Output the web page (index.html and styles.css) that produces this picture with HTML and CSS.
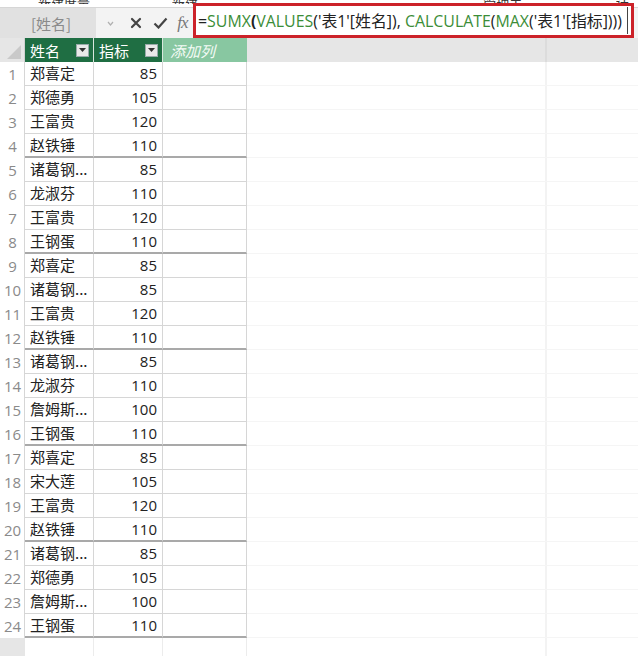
FILE: index.html
```html
<!DOCTYPE html>
<html lang="zh">
<head>
<meta charset="utf-8">
<title>Data view</title>
<link rel="stylesheet" href="styles.css">
</head>
<body>
<div class="topstrip">
  <span class="frag f1">新建度量值</span>
  <span class="frag f2">新建列</span>
  <span class="frag f3">管理关系</span>
  <span class="frag f4">计算</span>
</div>
<div class="fbar">
  <div class="namebox">[姓名]</div>
  <div class="nbdrop"><svg width="7" height="5" viewBox="0 0 7 5"><path d="M1 1 L3.5 4 L6 1" fill="none" stroke="#b0b0b0" stroke-width="1.2"/></svg></div>
  <div class="fbtn x"><svg width="12" height="12" viewBox="0 0 12 12"><path d="M2 2 L10 10 M10 2 L2 10" stroke="#444" stroke-width="2.2" stroke-linecap="round"/></svg></div>
  <div class="fbtn ok"><svg width="15" height="12" viewBox="0 0 15 12"><path d="M1.5 6.5 L5.5 10.5 L13.5 1.5" fill="none" stroke="#444" stroke-width="2.2"/></svg></div>
  <div class="fbtn fx"><i>fx</i></div>
  <div class="formula">
    <div class="finner"><span class="k">=</span><span class="fn">SUMX</span><b class="k">(</b><span class="fn">VALUES</span><span class="k">('表1'[姓名]), </span><span class="fn">CALCULATE</span><span class="k">(</span><span class="fn">MAX</span><span class="k">('表1'[指标])))</span></div>
  </div>
</div>
<div class="sheet">
  <div class="row head">
    <div class="corner"><svg width="14" height="14" viewBox="0 0 14 14"><path d="M14 0 L14 14 L0 14 Z" fill="#c9c9c9"/></svg></div>
    <div class="hc">姓名<span class="dd"><svg width="7" height="4" viewBox="0 0 7 4"><path d="M0 0 H7 L3.5 4 Z" fill="#333"/></svg></span></div>
    <div class="hc">指标<span class="dd"><svg width="7" height="4" viewBox="0 0 7 4"><path d="M0 0 H7 L3.5 4 Z" fill="#333"/></svg></span></div>
    <div class="hc add">添加列</div>
    <div class="hrest"><div class="hsplit"></div></div>
  </div>
  <div class="row"><div class="rn">1</div><div class="c name">郑喜定</div><div class="c num">85</div><div class="c"></div><div class="rest"></div></div>
  <div class="row"><div class="rn">2</div><div class="c name">郑德勇</div><div class="c num">105</div><div class="c"></div><div class="rest"></div></div>
  <div class="row"><div class="rn">3</div><div class="c name">王富贵</div><div class="c num">120</div><div class="c"></div><div class="rest"></div></div>
  <div class="row grp"><div class="rn">4</div><div class="c name">赵铁锤</div><div class="c num">110</div><div class="c"></div><div class="rest"></div></div>
  <div class="row"><div class="rn">5</div><div class="c name">诸葛钢...</div><div class="c num">85</div><div class="c"></div><div class="rest"></div></div>
  <div class="row"><div class="rn">6</div><div class="c name">龙淑芬</div><div class="c num">110</div><div class="c"></div><div class="rest"></div></div>
  <div class="row"><div class="rn">7</div><div class="c name">王富贵</div><div class="c num">120</div><div class="c"></div><div class="rest"></div></div>
  <div class="row grp"><div class="rn">8</div><div class="c name">王钢蛋</div><div class="c num">110</div><div class="c"></div><div class="rest"></div></div>
  <div class="row"><div class="rn">9</div><div class="c name">郑喜定</div><div class="c num">85</div><div class="c"></div><div class="rest"></div></div>
  <div class="row"><div class="rn">10</div><div class="c name">诸葛钢...</div><div class="c num">85</div><div class="c"></div><div class="rest"></div></div>
  <div class="row"><div class="rn">11</div><div class="c name">王富贵</div><div class="c num">120</div><div class="c"></div><div class="rest"></div></div>
  <div class="row grp"><div class="rn">12</div><div class="c name">赵铁锤</div><div class="c num">110</div><div class="c"></div><div class="rest"></div></div>
  <div class="row"><div class="rn">13</div><div class="c name">诸葛钢...</div><div class="c num">85</div><div class="c"></div><div class="rest"></div></div>
  <div class="row"><div class="rn">14</div><div class="c name">龙淑芬</div><div class="c num">110</div><div class="c"></div><div class="rest"></div></div>
  <div class="row"><div class="rn">15</div><div class="c name">詹姆斯...</div><div class="c num">100</div><div class="c"></div><div class="rest"></div></div>
  <div class="row grp"><div class="rn">16</div><div class="c name">王钢蛋</div><div class="c num">110</div><div class="c"></div><div class="rest"></div></div>
  <div class="row"><div class="rn">17</div><div class="c name">郑喜定</div><div class="c num">85</div><div class="c"></div><div class="rest"></div></div>
  <div class="row"><div class="rn">18</div><div class="c name">宋大莲</div><div class="c num">105</div><div class="c"></div><div class="rest"></div></div>
  <div class="row"><div class="rn">19</div><div class="c name">王富贵</div><div class="c num">120</div><div class="c"></div><div class="rest"></div></div>
  <div class="row grp"><div class="rn">20</div><div class="c name">赵铁锤</div><div class="c num">110</div><div class="c"></div><div class="rest"></div></div>
  <div class="row"><div class="rn">21</div><div class="c name">诸葛钢...</div><div class="c num">85</div><div class="c"></div><div class="rest"></div></div>
  <div class="row"><div class="rn">22</div><div class="c name">郑德勇</div><div class="c num">105</div><div class="c"></div><div class="rest"></div></div>
  <div class="row"><div class="rn">23</div><div class="c name">詹姆斯...</div><div class="c num">100</div><div class="c"></div><div class="rest"></div></div>
  <div class="row grp"><div class="rn">24</div><div class="c name">王钢蛋</div><div class="c num">110</div><div class="c"></div><div class="rest"></div></div>
  <div class="row filler"><div class="rn"></div><div class="c"></div><div class="c"></div><div class="c"></div><div class="rest"></div></div>
</div>
</body>
</html>
```
FILE: styles.css
```css
* { box-sizing: border-box; }
html, body { margin: 0; padding: 0; background: #fff; }
body {
  width: 638px;
  height: 656px;
  overflow: hidden;
  font-family: "Open Sans", "Noto Sans CJK SC", sans-serif;
  font-size: 15px;
  color: #222;
}

/* clipped ribbon labels above */
.topstrip {
  height: 8px;
  display: flex;
  align-items: flex-end;
  overflow: hidden;
  border-bottom: 1px solid #d6d6d6;
}
.frag {
  display: block;
  height: 4px;
  overflow: hidden;
  font-family: "Noto Sans CJK SC", sans-serif;
  font-size: 13px;
  line-height: 6px;
  color: #333;
  margin-bottom: 3px;
}
.f1 { margin-left: 38px; }
.f2 { margin-left: 78px; }
.f3 { margin-left: 278px; }
.f4 { margin-left: 88px; }

/* formula bar */
.fbar {
  height: 30px;
  display: flex;
  align-items: stretch;
  background: #f3f3f3;
}
.fbar > div { flex-shrink: 0; }
.namebox {
  width: 96px;
  background: #e1e1e1;
  color: #8a8a8a;
  font-family: "Noto Sans CJK SC", sans-serif;
  font-size: 15px;
  display: flex;
  align-items: center;
  justify-content: center;
  padding-left: 6px;
}
.nbdrop {
  width: 28px;
  display: flex;
  align-items: center;
  justify-content: center;
}
.fbtn {
  width: 24px;
  display: flex;
  align-items: center;
  justify-content: center;
}
.fbtn.fx { width: 21px; }
.fbtn.fx i {
  font-family: "Liberation Serif", serif;
  font-size: 17px;
  color: #777;
  letter-spacing: -1px;
}
.fbar > .formula {
  flex: 1 1 auto;
  min-width: 0;
  margin-top: -5px;
  margin-right: 4px;
  border: 3px solid #cc2229;
  background: #fff;
  display: flex;
  align-items: stretch;
  padding: 1px 3px 1px 1px;
}
.finner {
  flex: 1;
  min-width: 0;
  display: block;
  border-right: 1px solid #444;
  white-space: pre;
  overflow: hidden;
  font-family: "Open Sans", "Noto Sans CJK SC", sans-serif;
  font-size: 15.9px;
  line-height: 29px;
  letter-spacing: 0;
  color: #333;
  padding-left: 1px;
}
.finner .fn { color: #3b8d38; }
.finner .k { color: #222; }
.finner b { font-weight: 700; }

/* sheet */
.row {
  display: grid;
  grid-template-columns: 25px 69px 69px 84px 1fr;
  height: 24px;
}
.head { background: #e6e6e6; }
.corner {
  background: #e6e6e6;
  border-right: 1px solid #d0d0d0;
  display: flex;
  align-items: flex-end;
  justify-content: flex-end;
  padding: 0 3px 3px 0;
}
.hc {
  background: #1f6e43;
  color: #fff;
  font-family: "Noto Sans CJK SC", sans-serif;
  font-size: 15px;
  display: flex;
  align-items: center;
  padding-left: 5px;
  border-right: 1px solid #d9e6dd;
}
.dd {
  margin-left: auto;
  margin-right: 4px;
  width: 13px;
  height: 13px;
  background: #e9e9e9;
  border: 1px solid #9aa;
  display: flex;
  align-items: center;
  justify-content: center;
}
.hc.add {
  background: #88c7a1;
  font-style: italic;
  color: #f4fbf6;
  padding-left: 7px;
  border-right: none;
}
.hrest {
  background: #e6e6e6;
  display: flex;
}
.hsplit {
  margin-left: 298px;
  width: 2px;
  background: #dcdcdc;
}

.rn {
  color: #8a8a8a;
  text-align: center;
  line-height: 24px;
  border-right: 1px solid #d6d6d6;
  padding-left: 1px;
}
.c {
  border-right: 1px solid #d6d6d6;
  border-bottom: 1px solid #d6d6d6;
  line-height: 23px;
  white-space: nowrap;
  overflow: hidden;
}
.c.name {
  font-family: "Noto Sans CJK SC", sans-serif;
  padding-left: 5px;
  line-height: 22px;
}
.c.num {
  text-align: right;
  padding-right: 5px;
}
.grp .c {
  border-bottom: 2px solid #a9a9a9;
}
.rest {
  border-bottom: 1px solid #f5f5f5;
  background: linear-gradient(to right, transparent 298px, #f3f3f3 298px, #f3f3f3 300px, transparent 300px);
}
.filler .rn { background: #e6e6e6; border-right: none; }
.filler .c { border-bottom: none; border-right: 1px solid #ececec; }
.filler .rest { border-bottom: none; }
```
